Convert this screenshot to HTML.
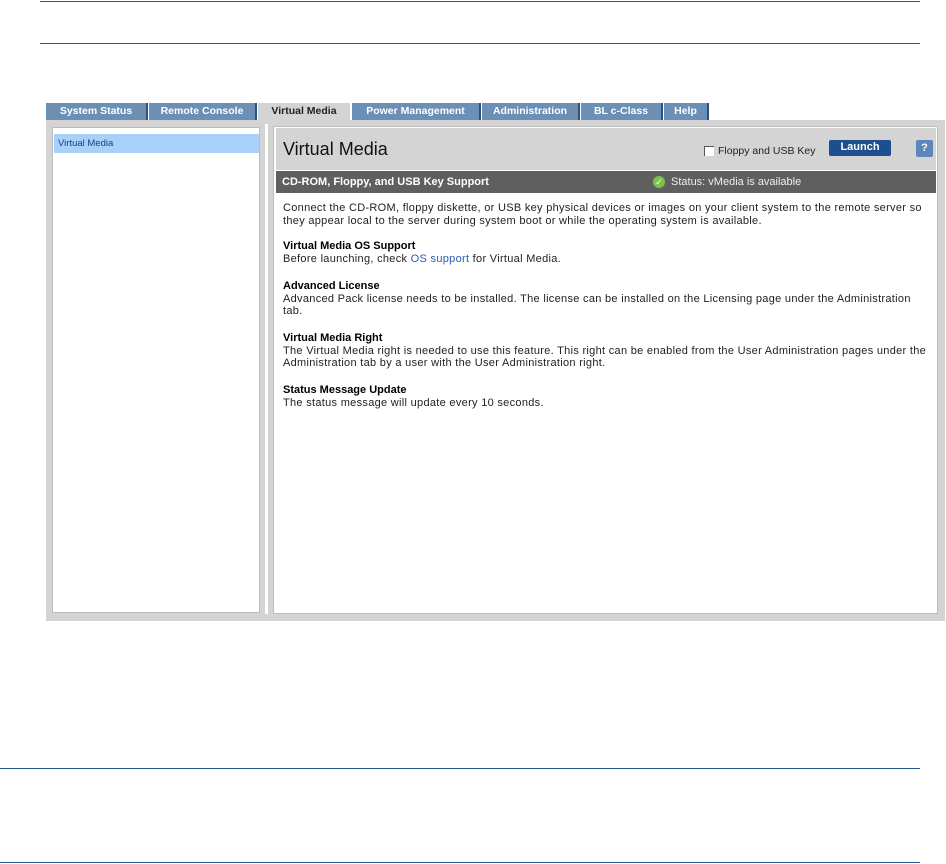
<!DOCTYPE html>
<html><head><style>
body{margin:0;width:946px;height:864px;background:#fff;position:relative;font-family:"Liberation Sans",Arial,sans-serif;overflow:hidden}
.hl{position:absolute;height:1px;background:#1f5a96}
.tab{position:absolute;top:103px;height:17px;background:#6b8fb5;color:#fff;font-size:10.5px;font-weight:bold;line-height:17px;text-align:center;border-right:2px solid #2d4f78;box-sizing:border-box}
.tab.act{background:#d4d4d4;color:#222;border:none;height:18px}
.abs{position:absolute}
.t{position:absolute;left:283px;font-size:11px;letter-spacing:0.3px;color:#222;line-height:12.6px;width:660px;white-space:nowrap}
.t b{color:#000;letter-spacing:0}
</style></head><body>
<div class="hl" style="left:40px;top:1px;width:880px"></div>
<div class="hl" style="left:40px;top:43px;width:880px"></div>
<div class="hl" style="left:0;top:768px;width:920px"></div>
<div class="hl" style="left:0;top:862px;width:920px"></div>

<div class="tab" style="left:46px;width:102px">System Status</div>
<div class="tab" style="left:149px;width:108px">Remote Console</div>
<div class="tab act" style="left:258px;width:92px">Virtual Media</div>
<div class="tab" style="left:352px;width:129px">Power Management</div>
<div class="tab" style="left:482px;width:98px">Administration</div>
<div class="tab" style="left:581px;width:82px">BL c-Class</div>
<div class="tab" style="left:664px;width:45px">Help</div>

<div class="abs" style="left:46px;top:120px;width:899px;height:501px;background:#d4d4d4"></div>
<div class="abs" style="left:52px;top:127px;width:208px;height:486px;background:#fff;border:1px solid #bbb;box-sizing:border-box"></div>
<div class="abs" style="left:54px;top:134px;width:205px;height:19px;background:#a9d0f8;color:#1a3a8a;font-size:9.5px;line-height:19px;padding-left:4px;box-sizing:border-box">Virtual Media</div>
<div class="abs" style="left:265px;top:124px;width:3px;height:490px;background:#fff"></div>
<div class="abs" style="left:273px;top:126px;width:665px;height:488px;background:#fff;border:1px solid #bbb;box-sizing:border-box"></div>
<div class="abs" style="left:276px;top:128px;width:660px;height:42px;background:#d4d4d4"></div>
<div class="abs" style="left:283px;top:139px;font-size:18px;color:#111">Virtual Media</div>
<div class="abs" style="left:704px;top:146px;width:9px;height:9px;background:#fff;border-top:1px solid #555;border-left:1px solid #555"></div>
<div class="abs" style="left:718px;top:145px;font-size:10.5px;color:#222">Floppy and USB Key</div>
<div class="abs" style="left:829px;top:140px;width:62px;height:16px;background:#1d4f8e;border-radius:2px;color:#fff;font-size:11px;font-weight:bold;text-align:center;line-height:15px">Launch</div>
<div class="abs" style="left:916px;top:140px;width:17px;height:17px;background:#5d87b8;border-radius:2px;color:#fff;font-size:11px;font-weight:bold;text-align:center;line-height:17px">?</div>
<div class="abs" style="left:276px;top:171px;width:660px;height:22px;background:#5f5f5f"></div>
<div class="abs" style="left:282px;top:176px;font-size:11px;font-weight:bold;color:#fff">CD-ROM, Floppy, and USB Key Support</div>
<div class="abs" style="left:653px;top:176px;width:12px;height:12px;border-radius:50%;background:#7cc24a;color:#fff;font-size:9px;text-align:center;line-height:12px">✓</div>
<div class="abs" style="left:671px;top:176px;font-size:11px;color:#eee">Status: vMedia is available</div>

<div class="t" style="top:202px">Connect the CD-ROM, floppy diskette, or USB key physical devices or images on your client system to the remote server so<br>they appear local to the server during system boot or while the operating system is available.</div>
<div class="t" style="top:240px"><b>Virtual Media OS Support</b><br>Before launching, check <span style="color:#2a5ab8">OS support</span> for Virtual Media.</div>
<div class="t" style="top:280px"><b>Advanced License</b><br>Advanced Pack license needs to be installed. The license can be installed on the Licensing page under the Administration<br>tab.</div>
<div class="t" style="top:332px"><b>Virtual Media Right</b><br>The Virtual Media right is needed to use this feature. This right can be enabled from the User Administration pages under the<br>Administration tab by a user with the User Administration right.</div>
<div class="t" style="top:384px"><b>Status Message Update</b><br>The status message will update every 10 seconds.</div>
</body></html>
